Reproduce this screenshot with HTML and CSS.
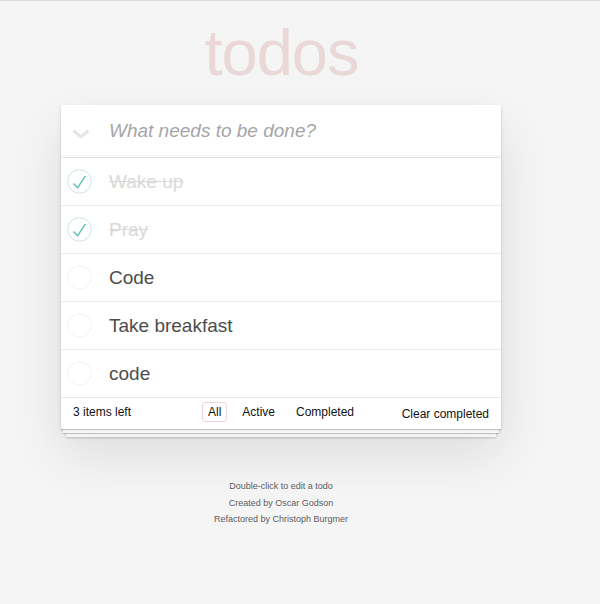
FILE: index.html
```html
<!DOCTYPE html>
<html lang="en">
<head>
<meta charset="utf-8">
<title>Todos</title>
<link rel="stylesheet" href="styles.css">
</head>
<body>
<div class="page">
  <h1 class="title">todos</h1>
  <section class="todoapp">
    <header class="new-row">
      <svg class="toggle-all" width="18" height="10" viewBox="0 0 18 10"><polyline points="1.5,1.5 9,8 16.5,1.5" fill="none" stroke="#e6e6e6" stroke-width="3"/></svg>
      <input class="new-todo" placeholder="What needs to be done?">
    </header>
    <ul class="todo-list">
      <li class="todo done">
        <svg class="check" width="25" height="25" viewBox="-2 -2 104 104"><circle cx="50" cy="50" r="49" fill="none" stroke="#bddad5" stroke-width="3"/><path fill="#5dc2af" d="M72 25L42 71 27 56l-4 4 20 20 34-52z"/></svg>
        <span class="label">Wake up</span>
      </li>
      <li class="todo done">
        <svg class="check" width="25" height="25" viewBox="-2 -2 104 104"><circle cx="50" cy="50" r="49" fill="none" stroke="#bddad5" stroke-width="3"/><path fill="#5dc2af" d="M72 25L42 71 27 56l-4 4 20 20 34-52z"/></svg>
        <span class="label">Pray</span>
      </li>
      <li class="todo">
        <svg class="check" width="25" height="25" viewBox="-2 -2 104 104"><circle cx="50" cy="50" r="49" fill="none" stroke="#ededed" stroke-width="3"/></svg>
        <span class="label">Code</span>
      </li>
      <li class="todo">
        <svg class="check" width="25" height="25" viewBox="-2 -2 104 104"><circle cx="50" cy="50" r="49" fill="none" stroke="#ededed" stroke-width="3"/></svg>
        <span class="label">Take breakfast</span>
      </li>
      <li class="todo">
        <svg class="check" width="25" height="25" viewBox="-2 -2 104 104"><circle cx="50" cy="50" r="49" fill="none" stroke="#ededed" stroke-width="3"/></svg>
        <span class="label">code</span>
      </li>
    </ul>
    <footer class="footer">
      <span class="count">3 items left</span>
      <ul class="filters">
        <li><a class="filter selected">All</a></li>
        <li><a class="filter">Active</a></li>
        <li><a class="filter">Completed</a></li>
      </ul>
      <span class="clear">Clear completed</span>
    </footer>
  </section>
  <footer class="info">
    <p>Double-click to edit a todo</p>
    <p>Created by Oscar Godson</p>
    <p>Refactored by Christoph Burgmer</p>
  </footer>
</div>
</body>
</html>
```
FILE: styles.css
```css
html, body {
  margin: 0;
  padding: 0;
}

body {
  background: #f5f5f5;
  border-top: 1px solid #d9d9df;
  font-family: "Liberation Sans", Arial, sans-serif;
  color: #4d4d4d;
  -webkit-font-smoothing: antialiased;
}

.page {
  width: 440px;
  margin-left: 61px;
}

.title {
  margin: 19px 0 20px;
  font-size: 65px;
  line-height: 65px;
  font-weight: 400;
  letter-spacing: -1px;
  text-align: center;
  color: rgba(175, 47, 47, 0.15);
  text-indent: 1px;
}

.todoapp {
  background: #fff;
  box-shadow:
    0 1px 1px rgba(0, 0, 0, 0.2),
    0 6px 0 -2px #f6f6f6,
    0 7px 1px -2px rgba(0, 0, 0, 0.2),
    0 13px 0 -5px #f6f6f6,
    0 14px 2px -5px rgba(0, 0, 0, 0.2),
    0 2px 4px 0 rgba(0, 0, 0, 0.1),
    0 25px 50px 0 rgba(0, 0, 0, 0.1);
}

.new-row {
  display: flex;
  align-items: center;
  height: 52px;
  border-bottom: 1px solid #e6e6e6;
  box-shadow: inset 0 -2px 1px rgba(0, 0, 0, 0.03);
}

.toggle-all {
  margin-left: 11px;
  margin-top: 5px;
  flex: none;
}

.new-todo {
  flex: 1;
  min-width: 0;
  margin-left: 19px;
  border: 0;
  padding: 0;
  outline: none;
  background: transparent;
  font-family: "Liberation Sans", Arial, sans-serif;
  font-size: 19px;
  color: #4d4d4d;
}

.new-todo::placeholder {
  font-style: italic;
  color: #a5a5a8;
}

.todo-list {
  list-style: none;
  margin: 0;
  padding: 0;
}

.todo {
  display: flex;
  align-items: center;
  height: 47px;
  border-bottom: 1px solid #ededed;
}

.todo:last-child {
  border-bottom: 0;
}

.check {
  flex: none;
  margin-left: 6px;
}

.label {
  margin-left: 17px;
  font-size: 19px;
  color: #4d4d4d;
}

.done .label {
  color: #d9d9d9;
  text-decoration: line-through;
}

.footer {
  box-sizing: border-box;
  display: grid;
  grid-template-columns: 1fr auto 1fr;
  align-items: center;
  height: 32px;
  padding: 0 12px 3px;
  border-top: 1px solid #e6e6e6;
  font-size: 12px;
  color: #111;
}

.count {
  justify-self: start;
}

.filters {
  display: flex;
  gap: 9px;
  list-style: none;
  margin: 0;
  padding: 0;
}

.filter {
  display: block;
  padding: 2px 5px;
  line-height: 14px;
  border: 1px solid transparent;
  border-radius: 3px;
  color: #111;
}

.filter.selected {
  border-color: rgba(175, 47, 47, 0.2);
}

.clear {
  justify-self: end;
  margin-top: 3px;
}

.info {
  margin-top: 49px;
  text-align: center;
  font-size: 9px;
  color: #5a5a5a;
  text-shadow: 0 1px 0 rgba(255, 255, 255, 0.5);
}

.info p {
  margin: 0;
  line-height: 16.65px;
}
```
